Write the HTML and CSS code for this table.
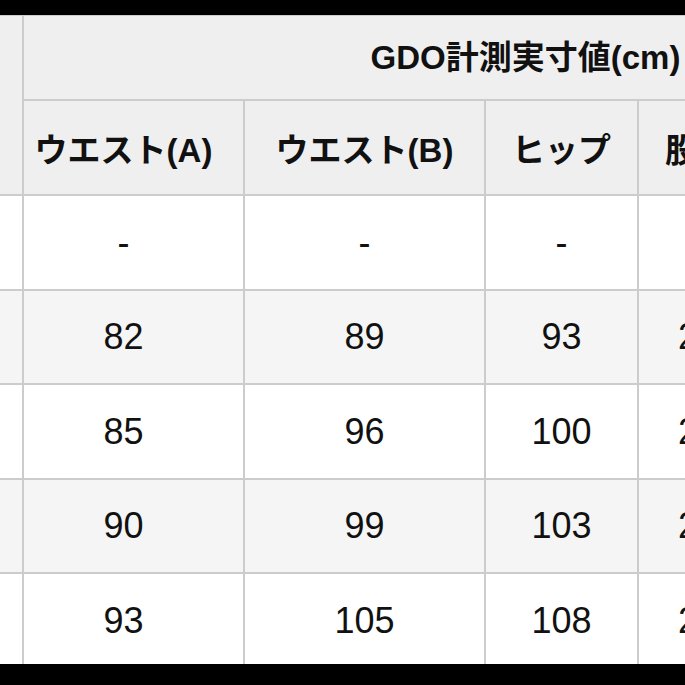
FILE: index.html
```html
<!DOCTYPE html>
<html lang="ja">
<head>
<meta charset="utf-8">
<title>GDO計測実寸値</title>
<link rel="stylesheet" href="styles.css">
</head>
<body>
<div class="frame">
  <table class="size-table">
    <colgroup>
      <col class="c-size">
      <col class="c-a">
      <col class="c-b">
      <col class="c-hip">
      <col class="c-rise">
      <col class="c-x">
      <col class="c-x">
    </colgroup>
    <thead>
      <tr class="r-title">
        <th class="head" rowspan="2"></th>
        <th class="head title" colspan="6">GDO計測実寸値(cm)</th>
      </tr>
      <tr class="r-head">
        <th class="head first">ウエスト(A)</th>
        <th class="head">ウエスト(B)</th>
        <th class="head">ヒップ</th>
        <th class="head">股上</th>
        <th class="head">股下</th>
        <th class="head">ワタリ</th>
      </tr>
    </thead>
    <tbody>
      <tr><td></td><td class="first">-</td><td>-</td><td>-</td><td>-</td><td>-</td><td>-</td></tr>
      <tr class="alt"><td></td><td class="first">82</td><td>89</td><td>93</td><td>26</td><td>76</td><td>30</td></tr>
      <tr><td></td><td class="first">85</td><td>96</td><td>100</td><td>27</td><td>76</td><td>32</td></tr>
      <tr class="alt"><td></td><td class="first">90</td><td>99</td><td>103</td><td>28</td><td>76</td><td>33</td></tr>
      <tr><td></td><td class="first">93</td><td>105</td><td>108</td><td>29</td><td>76</td><td>34</td></tr>
    </tbody>
  </table>
</div>
</body>
</html>
```

FILE: styles.css
```css
html, body {
  margin: 0;
  padding: 0;
  background: #000;
}

.frame {
  margin-top: 15px;
  height: 649px;
  width: 685px;
  overflow: hidden;
  background: #fff;
}

.size-table {
  margin-top: -1px;
  margin-left: -98px;
  border-collapse: collapse;
  table-layout: fixed;
  width: 1125px;
  font-family: "Liberation Sans", "Noto Sans CJK JP", sans-serif;
  color: #111;
}

.c-size { width: 120px; }
.c-a { width: 221px; }
.c-b { width: 241px; }
.c-hip { width: 153px; }
.c-rise { width: 120px; }
.c-x { width: 135px; }

.size-table th,
.size-table td {
  border: 2px solid #cccccc;
  padding: 0;
  text-align: center;
  vertical-align: middle;
  overflow: hidden;
  white-space: nowrap;
}

.head {
  background: #efefef;
  font-weight: 700;
  font-size: 33px;
}

.r-title th {
  height: 77px;
}

.size-table th.title {
  padding-bottom: 6px;
}

.r-head th {
  height: 93px;
}

.size-table td {
  height: 93px;
  font-size: 36px;
  font-weight: 400;
  background: #ffffff;
}

.size-table tr.alt td {
  height: 92px;
  background: #f5f5f5;
}

.size-table .first {
  padding-right: 20px;
}
```
